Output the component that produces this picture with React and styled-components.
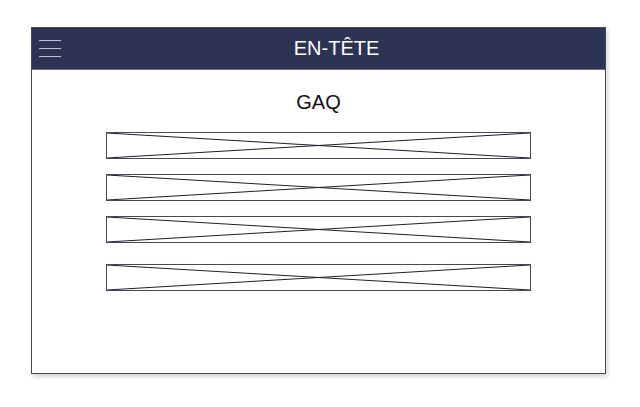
import React from 'react';
import styled, { createGlobalStyle } from 'styled-components';

const GlobalStyle = createGlobalStyle`
  body {
    margin: 0;
    background: #ffffff;
    font-family: "Liberation Sans", Arial, sans-serif;
  }
`;

const Page = styled.div`
  width: 640px;
  height: 407px;
  padding: 27px 0 0 31px;
  box-sizing: border-box;
`;

const Frame = styled.div`
  width: 575px;
  height: 347px;
  box-sizing: border-box;
  border: 1px solid #45485c;
  background: #ffffff;
  box-shadow: 2px 3px 4px rgba(0, 0, 0, 0.16);
  display: flex;
  flex-direction: column;
`;

const Header = styled.header`
  height: 42px;
  background: #2d3352;
  display: flex;
  align-items: center;
  border-bottom: 1px solid #6a6d85;
  box-sizing: border-box;
`;

const Burger = styled.div`
  width: 36px;
  padding-left: 7px;
  box-sizing: border-box;
  display: flex;
  flex-direction: column;
  gap: 7px;
  span {
    display: block;
    width: 22px;
    height: 1px;
    background: #b9bccb;
  }
`;

const Title = styled.h1`
  flex: 1;
  margin: 0;
  text-align: center;
  color: #ffffff;
  font-size: 20px;
  font-weight: 400;
  line-height: 23px;
`;

const Content = styled.main`
  flex: 1;
  display: flex;
  flex-direction: column;
  align-items: center;
  padding-top: 21px;
`;

const Heading = styled.h2`
  margin: 0 0 18px;
  font-size: 20px;
  font-weight: 400;
  line-height: 23px;
  color: #111111;
`;

const Placeholder = styled.div`
  width: 425px;
  height: 27px;
  box-sizing: border-box;
  border: 1px solid #45485c;
  margin-top: ${(p) => p.$space}px;
  svg {
    display: block;
    width: 100%;
    height: 100%;
  }
`;

const rows = [0, 15, 15, 21];

function ImageBox({ space }) {
  return (
    <Placeholder $space={space}>
      <svg viewBox="0 0 423 25" preserveAspectRatio="none">
        <line x1="0" y1="0" x2="423" y2="25" stroke="#1e1f2b" strokeWidth="1" />
        <line x1="0" y1="25" x2="423" y2="0" stroke="#1e1f2b" strokeWidth="1" />
      </svg>
    </Placeholder>
  );
}

export default function App() {
  return (
    <>
      <GlobalStyle />
      <Page>
        <Frame>
          <Header>
            <Burger>
              <span />
              <span />
              <span />
            </Burger>
            <Title>EN-TÊTE</Title>
          </Header>
          <Content>
            <Heading>GAQ</Heading>
            {rows.map((s, i) => (
              <ImageBox key={i} space={s} />
            ))}
          </Content>
        </Frame>
      </Page>
    </>
  );
}
